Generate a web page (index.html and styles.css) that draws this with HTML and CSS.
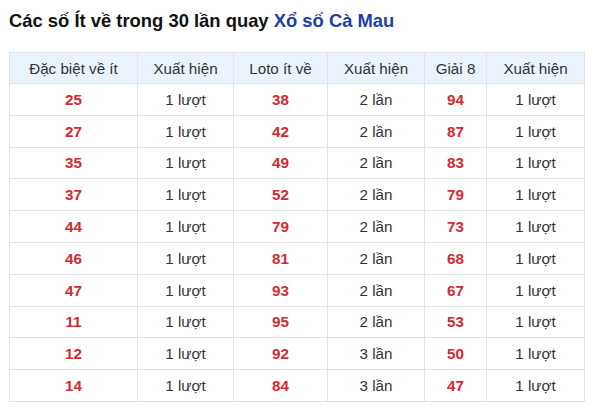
FILE: index.html
```html
<!DOCTYPE html>
<html lang="vi">
<head>
<meta charset="utf-8">
<link rel="stylesheet" href="styles.css">
</head>
<body>
<div class="page">
  <h2 class="title">Các số Ít về trong 30 lần quay <span class="hl">Xổ số Cà Mau</span></h2>
  <table class="stats">
    <colgroup>
      <col class="c1"><col class="c2"><col class="c3"><col class="c4"><col class="c5"><col class="c6">
    </colgroup>
    <thead>
      <tr><th>Đặc biệt về ít</th><th>Xuất hiện</th><th>Loto ít về</th><th>Xuất hiện</th><th>Giải 8</th><th>Xuất hiện</th></tr>
    </thead>
    <tbody>
      <tr><td class="n">25</td><td>1 lượt</td><td class="n">38</td><td>2 lần</td><td class="n">94</td><td>1 lượt</td></tr>
      <tr><td class="n">27</td><td>1 lượt</td><td class="n">42</td><td>2 lần</td><td class="n">87</td><td>1 lượt</td></tr>
      <tr><td class="n">35</td><td>1 lượt</td><td class="n">49</td><td>2 lần</td><td class="n">83</td><td>1 lượt</td></tr>
      <tr><td class="n">37</td><td>1 lượt</td><td class="n">52</td><td>2 lần</td><td class="n">79</td><td>1 lượt</td></tr>
      <tr><td class="n">44</td><td>1 lượt</td><td class="n">79</td><td>2 lần</td><td class="n">73</td><td>1 lượt</td></tr>
      <tr><td class="n">46</td><td>1 lượt</td><td class="n">81</td><td>2 lần</td><td class="n">68</td><td>1 lượt</td></tr>
      <tr><td class="n">47</td><td>1 lượt</td><td class="n">93</td><td>2 lần</td><td class="n">67</td><td>1 lượt</td></tr>
      <tr><td class="n">11</td><td>1 lượt</td><td class="n">95</td><td>2 lần</td><td class="n">53</td><td>1 lượt</td></tr>
      <tr><td class="n">12</td><td>1 lượt</td><td class="n">92</td><td>3 lần</td><td class="n">50</td><td>1 lượt</td></tr>
      <tr><td class="n">14</td><td>1 lượt</td><td class="n">84</td><td>3 lần</td><td class="n">47</td><td>1 lượt</td></tr>
    </tbody>
  </table>
</div>
</body>
</html>
```
FILE: styles.css
```css
html, body {
  margin: 0;
  padding: 0;
  background: #fff;
}
body {
  font-family: "Liberation Sans", Arial, sans-serif;
  color: #222;
}
.page {
  padding: 8px 0 0 9px;
  width: 575px;
}
.title {
  margin: 0 0 19px 0;
  font-size: 18.4px;
  font-weight: bold;
  line-height: 25px;
  color: #111;
}
.hl {
  color: #1e3ea3;
}
.stats {
  width: 575px;
  border-collapse: collapse;
  table-layout: fixed;
  font-size: 15.2px;
}
.c1 { width: 128px; }
.c2 { width: 96px; }
.c3 { width: 94px; }
.c4 { width: 97px; }
.c5 { width: 62px; }
.c6 { width: 98px; }
.stats th, .stats td {
  border: 1px solid #e3e3e3;
  text-align: center;
  padding: 0;
}
.stats th {
  height: 30px;
  background: #eaf3fc;
  font-weight: normal;
  color: #333;
}
.stats td {
  height: 30.8px;
  color: #333;
}
.stats td.n {
  color: #d42a30;
  font-weight: bold;
}
```
